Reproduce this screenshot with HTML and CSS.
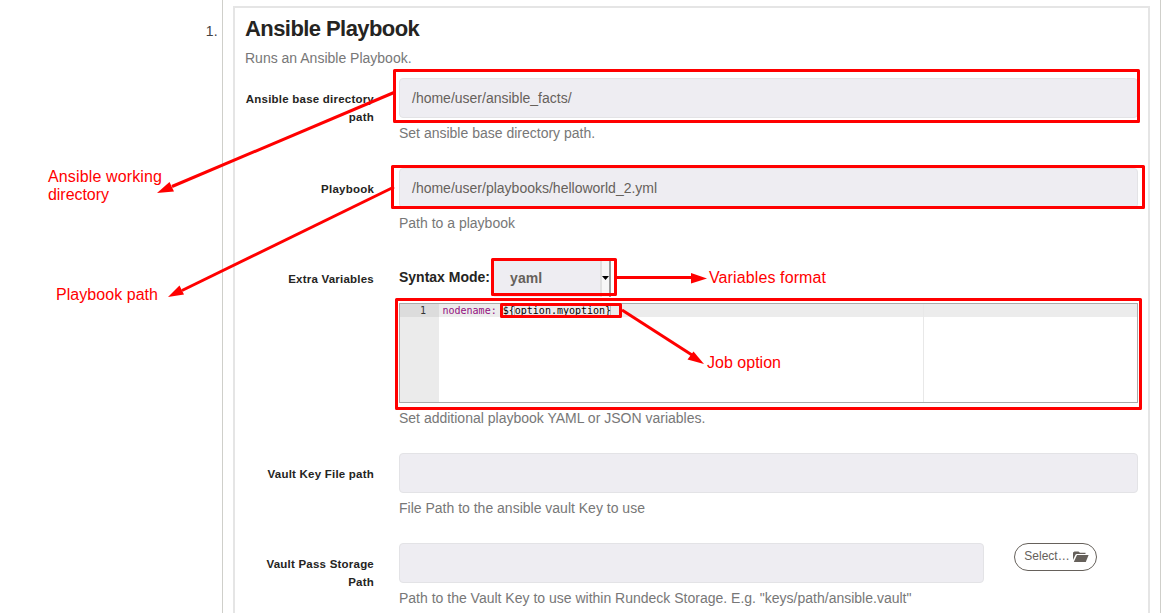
FILE: index.html
```html
<!DOCTYPE html>
<html lang="en">
<head>
<meta charset="utf-8">
<title>Ansible Playbook</title>
<link rel="stylesheet" href="styles.css">
</head>
<body>
<div class="page">
  <div class="step-number">1.</div>
  <div class="step">
    <div class="panel">
      <h1 class="title"><span>Ansible Playbook</span></h1>
      <p class="desc"><span>Runs an Ansible Playbook.</span></p>
      <div class="row">
        <div class="label">Ansible base directory path</div>
        <div class="field">
          <div class="input">/home/user/ansible_facts/</div>
          <div class="help">Set ansible base directory path.</div>
        </div>
      </div>
      <div class="row">
        <div class="label">Playbook</div>
        <div class="field">
          <div class="input">/home/user/playbooks/helloworld_2.yml</div>
          <div class="help">Path to a playbook</div>
        </div>
      </div>
      <div class="row">
        <div class="label">Extra Variables</div>
        <div class="field">
          <div class="syntax">
            <span class="syntax-label">Syntax Mode:</span>
            <div class="select"><span class="select-value">yaml</span><span class="select-arrow"><svg width="7" height="4" viewBox="0 0 7 4"><path d="M0 0h7L3.5 4z"/></svg></span></div>
          </div>
          <div class="editor">
            <div class="gutter"><div class="line-no">1</div></div>
            <div class="code"><div class="code-line"><span class="key">nodename:</span> <span class="sel">$<span class="bracket">{</span>option.myoption<span class="bracket">}</span></span></div></div>
            <div class="margin-side"><div class="code-line"></div></div>
          </div>
          <div class="help">Set additional playbook YAML or JSON variables.</div>
        </div>
      </div>
      <div class="row">
        <div class="label">Vault Key File path</div>
        <div class="field">
          <div class="input"></div>
          <div class="help">File Path to the ansible vault Key to use</div>
        </div>
      </div>
      <div class="row">
        <div class="label">Vault Pass Storage Path</div>
        <div class="field">
          <div class="with-button">
            <div class="input"></div>
            <button class="button">Select…<svg width="16" height="11" viewBox="0 0 16 11"><path d="M0 9V1.500L1.500 .4h4L7 1.800h5.500V3H3.600L2.600 3.600z"/><path d="M4 4h11.600L12.800 11H.8z"/></svg></button>
          </div>
          <div class="help">Path to the Vault Key to use within Rundeck Storage. E.g. "keys/path/ansible.vault"</div>
        </div>
      </div>
    </div>
  </div>

  <svg class="notes" width="1176" height="613" viewBox="0 0 1176 613">
    <g class="frames">
      <rect x="394.5" y="70.5" width="744" height="51"/>
      <rect x="392.5" y="166.5" width="751" height="41"/>
      <rect x="492.5" y="259.5" width="123" height="35"/>
      <rect x="396.5" y="299.5" width="744" height="109"/>
      <rect x="501.5" y="304.5" width="119" height="12"/>
      <path d="M394 92.500L172 186.500"/>
      <path d="M394 187L182 290.500"/>
      <path d="M617 277.500H693"/>
      <path d="M622 310L692 355"/>
    </g>
    <g class="heads">
      <path d="M157 193L169.500 182L174 191.500z"/>
      <path d="M168 297L179.500 285.500L184 294.500z"/>
      <path d="M707 278.500L691 273V283.500z"/>
      <path d="M704 364L693.500 351.500L687.500 359.500z"/>
    </g>
    <g class="captions">
      <text x="48" y="182" textLength="114">Ansible working</text>
      <text x="48" y="200" textLength="61">directory</text>
      <text x="56" y="300" textLength="102">Playbook path</text>
      <text x="709" y="283" textLength="117">Variables format</text>
      <text x="707" y="368" textLength="74">Job option</text>
    </g>
  </svg>
</div>
</body>
</html>
```
FILE: styles.css
```css
* { box-sizing: border-box; }
body { margin: 0; background: #fff; overflow: hidden; font: 14px/20px "Liberation Sans", Arial, sans-serif; color: #66615b; }
.page { position: relative; display: flex; width: 1176px; height: 613px; overflow: hidden; }
.step-number { width: 222px; padding: 21px 4px 0 0; text-align: right; color: #444; letter-spacing: .3px; }
.step { width: 939px; height: 640px; border: solid #cfcfca; border-width: 0 1px; padding: 6px 10px 0; }
.panel { height: 640px; border: 2px solid #e5e5e5; padding: 8px 10px 0; }
.title { margin: 0; font-size: 22px; letter-spacing: -.57px; line-height: 25px; color: #252422; white-space: nowrap; }
.desc { margin: 7px 0 10px; color: #777; }
.row { display: flex; gap: 25px; margin-bottom: 25px; }
.label { width: 129px; flex: none; padding-top: 12px; font-size: 11.5px; letter-spacing: .22px; line-height: 18px; font-weight: bold; text-align: right; color: #252422; }
.field { width: 739px; flex: none; }
.input { height: 40px; border: 1px solid #e3e3e6; border-radius: 4px; background: #eeedf2; padding: 9px 12px; }
.help { margin-top: 5px; color: #777; white-space: nowrap; }
.syntax { display: flex; gap: 5px; height: 40px; margin-bottom: 5px; }
.syntax-label { width: 90px; font-weight: bold; line-height: 38px; color: #252422; white-space: nowrap; }
.select { display: flex; width: 117px; height: 39px; background: #eeedf2; font-weight: bold; line-height: 40px; }
.select-value { width: 106px; padding-left: 16px; letter-spacing: .1px; }
.select-arrow { display: flex; width: 11px; align-items: center; justify-content: center; border-left: 2px solid #e0e0e0; border-right: 2px solid #999; background: #f7f7f7; }
.select-arrow svg { flex: none; fill: #000; }
.editor { display: flex; height: 100px; border: 1px solid #aaa; font: 10px/13px "DejaVu Sans Mono", monospace; color: #000; white-space: pre; }
.gutter { width: 39px; background: #ebebeb; color: #333; }
.line-no { height: 13px; padding-right: 13px; background: #dcdcdc; text-align: right; }
.code { width: 485px; border-right: 1px solid #e8e8e8; }
.code-line { height: 13px; padding-left: 3.5px; background: #ececec; }
.margin-side { flex: 1; }
.key { color: #930f80; }
.bracket { box-shadow: inset -1px 0 #bbb; }
.with-button { display: flex; gap: 30px; align-items: flex-start; }
.with-button .input { width: 585px; }
.button { display: flex; gap: 3px; align-items: center; justify-content: center; width: 83px; height: 28px; border: 1px solid #66615b; border-radius: 14px; padding: 0 0 2px 2px; background: #fff; color: #66615b; font: 12px/20px "Liberation Sans", Arial, sans-serif; }
.button svg { fill: #66615b; }
.notes { position: absolute; left: 0; top: 0; }
.frames { fill: none; stroke: #f00; stroke-width: 3; stroke-linejoin: round; }
.heads { fill: #f00; }
.captions { fill: #f00; font-size: 16px; }
```
